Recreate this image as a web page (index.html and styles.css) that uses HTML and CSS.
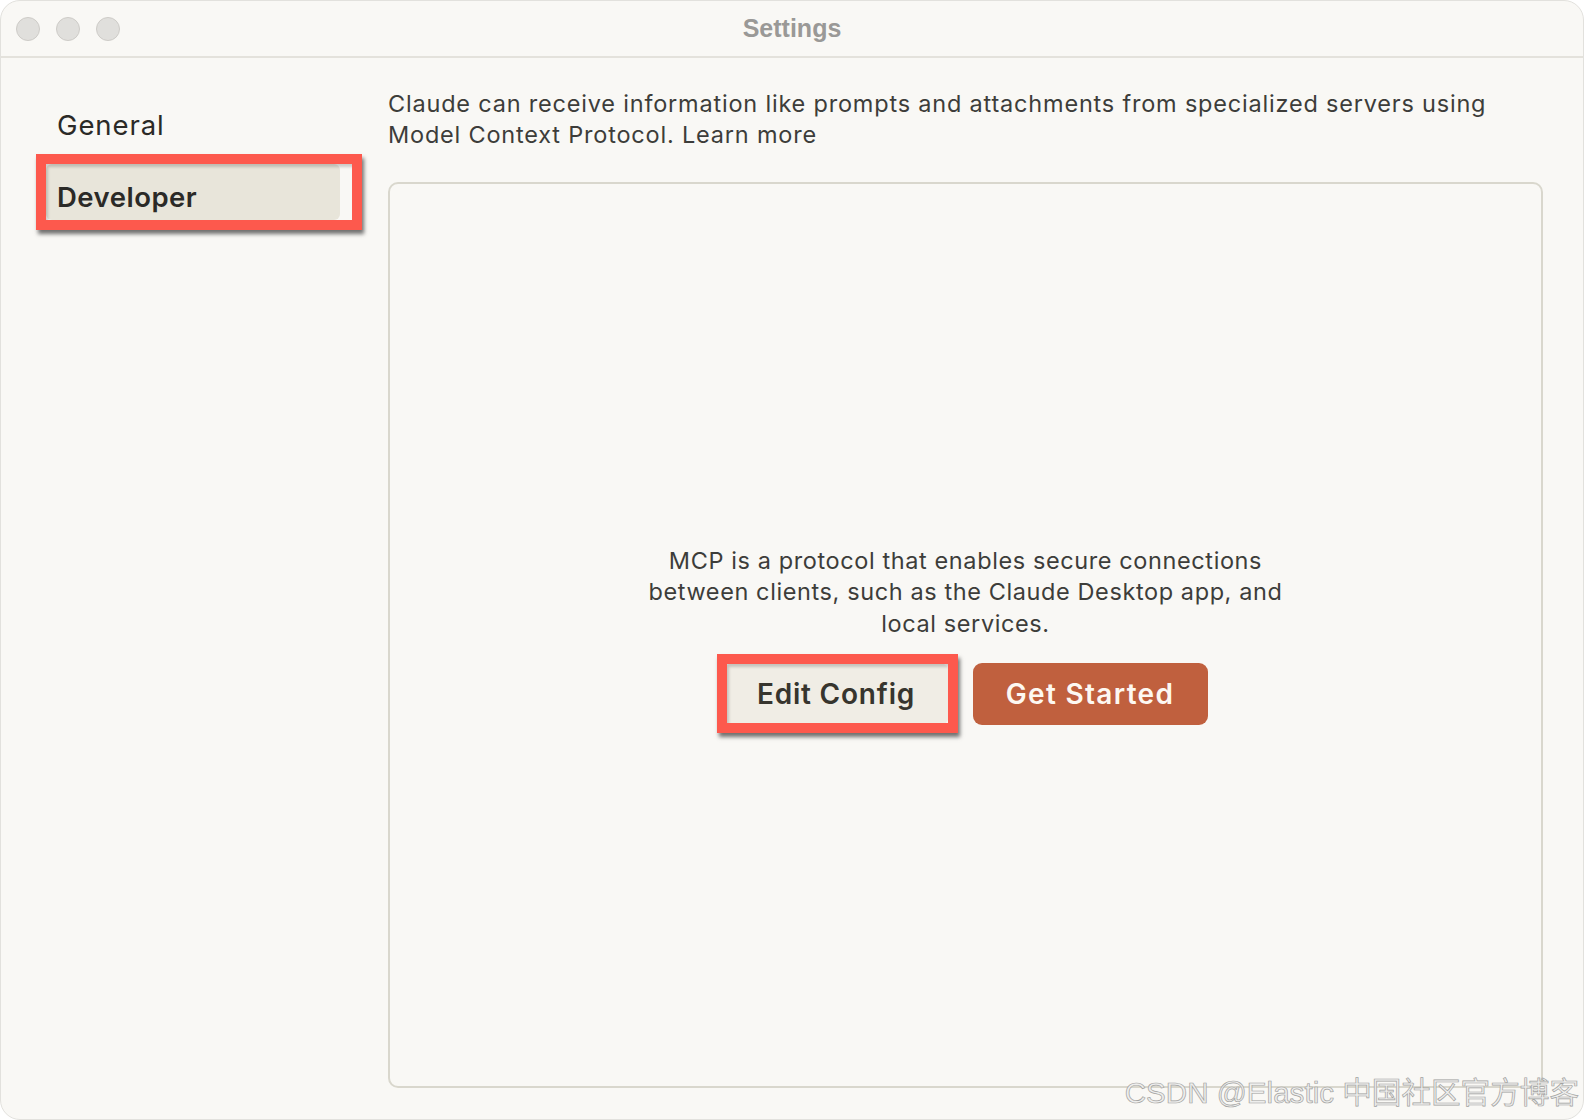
FILE: index.html
```html
<!DOCTYPE html>
<html lang="en">
<head>
    <meta charset="UTF-8">
    <title>Settings</title>
    <link rel="stylesheet" href="styles.css">
</head>
<body>
    <div class="window">
        <div class="titlebar">
            <div class="lights">
                <span class="light"></span>
                <span class="light"></span>
                <span class="light"></span>
            </div>
            <div class="title">Settings</div>
            <div></div>
        </div>

        <div class="main">
            <div class="sidebar">
                <div class="navitem">General</div>
                <div class="navitem active">Developer<span class="mark"></span></div>
            </div>

            <div class="content">
                <p class="intro">Claude can receive information like prompts and attachments from specialized servers using<br>Model Context Protocol. Learn more</p>

                <div class="panel">
                    <p class="blurb">MCP is a protocol that enables secure connections<br>between clients, such as the Claude Desktop app, and<br>local services.</p>
                    <div class="buttons">
                        <button class="btn btn-light">Edit Config<span class="mark"></span></button>
                        <button class="btn btn-main">Get Started</button>
                    </div>
                </div>
            </div>
        </div>

        <div class="watermark">CSDN @Elastic 中国社区官方博客</div>
    </div>
</body>
</html>
```

FILE: styles.css
```css
body {
    margin: 0;
    background-color: #ffffff;
    font-family: Inter, "Noto Sans", sans-serif;
}

.window {
    position: relative;
    width: 1584px;
    height: 1120px;
    box-sizing: border-box;
    background-color: #f9f8f5;
    border: 1px solid #e2e1dd;
    border-radius: 20px;
    overflow: hidden;
    display: flex;
    flex-direction: column;
}

.titlebar {
    height: 55px;
    border-bottom: 2px solid #e4e2dc;
    display: grid;
    grid-template-columns: 1fr auto 1fr;
    align-items: center;
}

.lights {
    display: flex;
    gap: 16px;
    padding-left: 15px;
    padding-top: 1px;
}

.light {
    width: 22px;
    height: 22px;
    border-radius: 50%;
    background-color: #e0dfdc;
    border: 1px solid #cdcbc7;
}

.title {
    font-family: "Liberation Sans", Arial, sans-serif;
    font-weight: bold;
    font-size: 25px;
    color: #9a9997;
}

.main {
    flex: 1;
    display: flex;
    min-height: 0;
}

.sidebar {
    width: 342px;
    padding-left: 45px;
    padding-top: 34px;
    display: flex;
    flex-direction: column;
    gap: 16px;
}

.navitem {
    position: relative;
    width: 283px;
    height: 45px;
    padding-top: 11px;
    padding-left: 11px;
    border-radius: 6px;
    font-size: 27.5px;
    line-height: 45px;
    letter-spacing: 0.9px;
    color: #2b2a27;
}

.navitem.active {
    background-color: #e8e5da;
    font-weight: 600;
    letter-spacing: 0.5px;
}

.mark {
    position: absolute;
    border: 10px solid #fd594d;
    box-shadow: 2px 4px 4px rgba(0, 0, 0, 0.55), inset 2px 3px 3px rgba(0, 0, 0, 0.18);
    pointer-events: none;
}

.navitem .mark {
    top: -10px;
    left: -10px;
    right: -22px;
    bottom: -10px;
}

.content {
    flex: 1;
    padding-right: 40px;
    padding-bottom: 31px;
    display: flex;
    flex-direction: column;
}

.intro {
    margin: 31px 0 32px 0;
    font-size: 23.5px;
    line-height: 30.5px;
    letter-spacing: 0.8px;
    color: #3d3d3a;
}

.panel {
    flex: 1;
    border: 2px solid #d9d7cd;
    border-radius: 10px;
    display: flex;
    flex-direction: column;
    align-items: center;
    justify-content: center;
}

.blurb {
    margin: 0 0 24px 0;
    text-align: center;
    font-size: 23.5px;
    line-height: 31.5px;
    letter-spacing: 0.6px;
    color: #3d3d3a;
}

.buttons {
    display: flex;
    gap: 24px;
}

.btn {
    position: relative;
    height: 62px;
    border: none;
    border-radius: 9px;
    font-family: Inter, "Noto Sans", sans-serif;
    font-size: 28px;
    font-weight: 600;
    letter-spacing: 0.8px;
}

.btn-light {
    width: 225px;
    background-color: #f0ede5;
    color: #37352e;
}

.btn-light .mark {
    top: -9px;
    left: -7px;
    right: -9px;
    bottom: -8px;
}

.btn-main {
    width: 235px;
    background-color: #c0603e;
    color: #fdf8f2;
    letter-spacing: 1.3px;
}

.watermark {
    position: absolute;
    right: 4px;
    bottom: 7px;
    font-family: "Liberation Sans", "Noto Sans CJK SC", sans-serif;
    font-size: 29.6px;
    color: #eeeeed;
    -webkit-text-stroke: 0.7px #a2a2a0;
}
```
